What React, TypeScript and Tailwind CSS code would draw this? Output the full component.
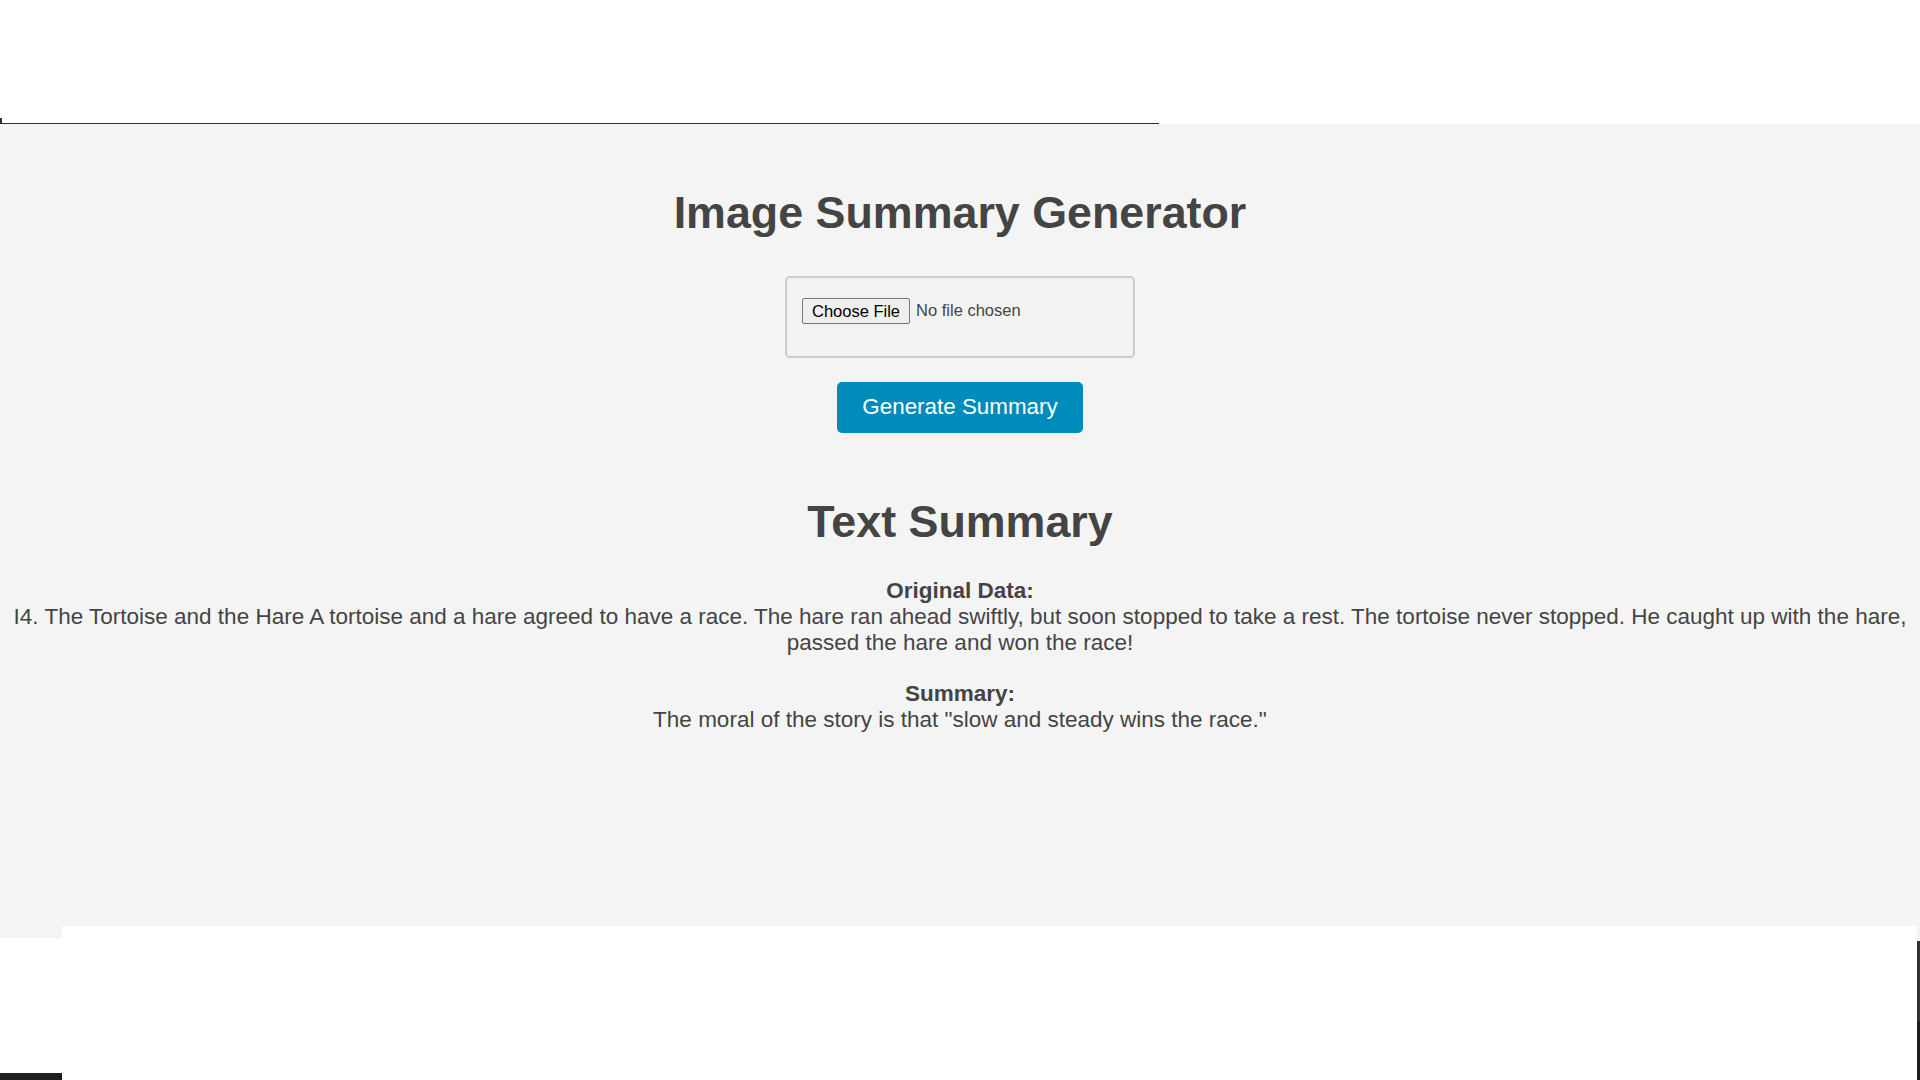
import React from "react";

const original =
  "I4. The Tortoise and the Hare A tortoise and a hare agreed to have a race. The hare ran ahead swiftly, but soon stopped to take a rest. The tortoise never stopped. He caught up with the hare, passed the hare and won the race!";

const summary = 'The moral of the story is that "slow and steady wins the race."';

export default function App() {
  return (
    <div className="flex h-[1080px] w-[1920px] flex-col overflow-hidden bg-white font-['Liberation_Sans',Arial,sans-serif] text-[#444]">
      {/* top strip with the stray rule */}
      <div className="flex h-[124px] flex-col justify-end">
        <div className="h-[5px] w-[2px] bg-[#2f2f3a]" />
        <div className="h-[1px] w-[1159px] bg-[#2f2f3a]" />
      </div>

      <main className="flex h-[802px] flex-col items-center bg-[#f4f4f4]">
        <h1 className="mt-[63px] text-[44.8px] font-bold leading-[51.5px]">
          Image Summary Generator
        </h1>

        <div className="mt-[37px] h-[82px] w-[350px] rounded-[5px] border-2 border-[#cccccc] bg-[#f2f2f2] pl-[15px] pt-[20px]">
          <div className="flex items-center">
            <button className="h-[26px] rounded-[2px] border border-[#767676] bg-[#efefef] px-[9px] text-[16.5px] leading-[24px] text-black">
              Choose File
            </button>
            <span className="ml-[6px] text-[16.5px] text-[#444]">
              No file chosen
            </span>
          </div>
        </div>

        <button className="mt-[24px] h-[51px] w-[246px] rounded-[5px] bg-[#008cba] text-[22.4px] leading-[26px] text-white">
          Generate Summary
        </button>

        <h2 className="mt-[63px] text-[44.8px] font-bold leading-[51.5px]">
          Text Summary
        </h2>

        <div className="mt-[31px] w-full text-center text-[22.5px] leading-[26px]">
          <p>
            <strong>Original Data:</strong>
            <br />
            {original}
          </p>
          <p className="mt-[24.7px]">
            <strong>Summary:</strong>
            <br />
            {summary}
          </p>
        </div>
      </main>

      <div className="flex flex-1">
        <div className="flex w-[62px] flex-col">
          <div className="h-[12px] bg-[#f4f4f4]" />
          <div className="flex-1" />
          <div className="h-[7px] bg-[#1e1e1e]" />
        </div>
        <div className="flex-1" />
        <div className="flex w-[3px] flex-col">
          <div className="h-[15px] bg-[#f4f4f4]" />
          <div className="h-[80px] bg-[#2e3040]" />
          <div className="flex-1 bg-[#1e1e1e]" />
        </div>
      </div>
    </div>
  );
}
